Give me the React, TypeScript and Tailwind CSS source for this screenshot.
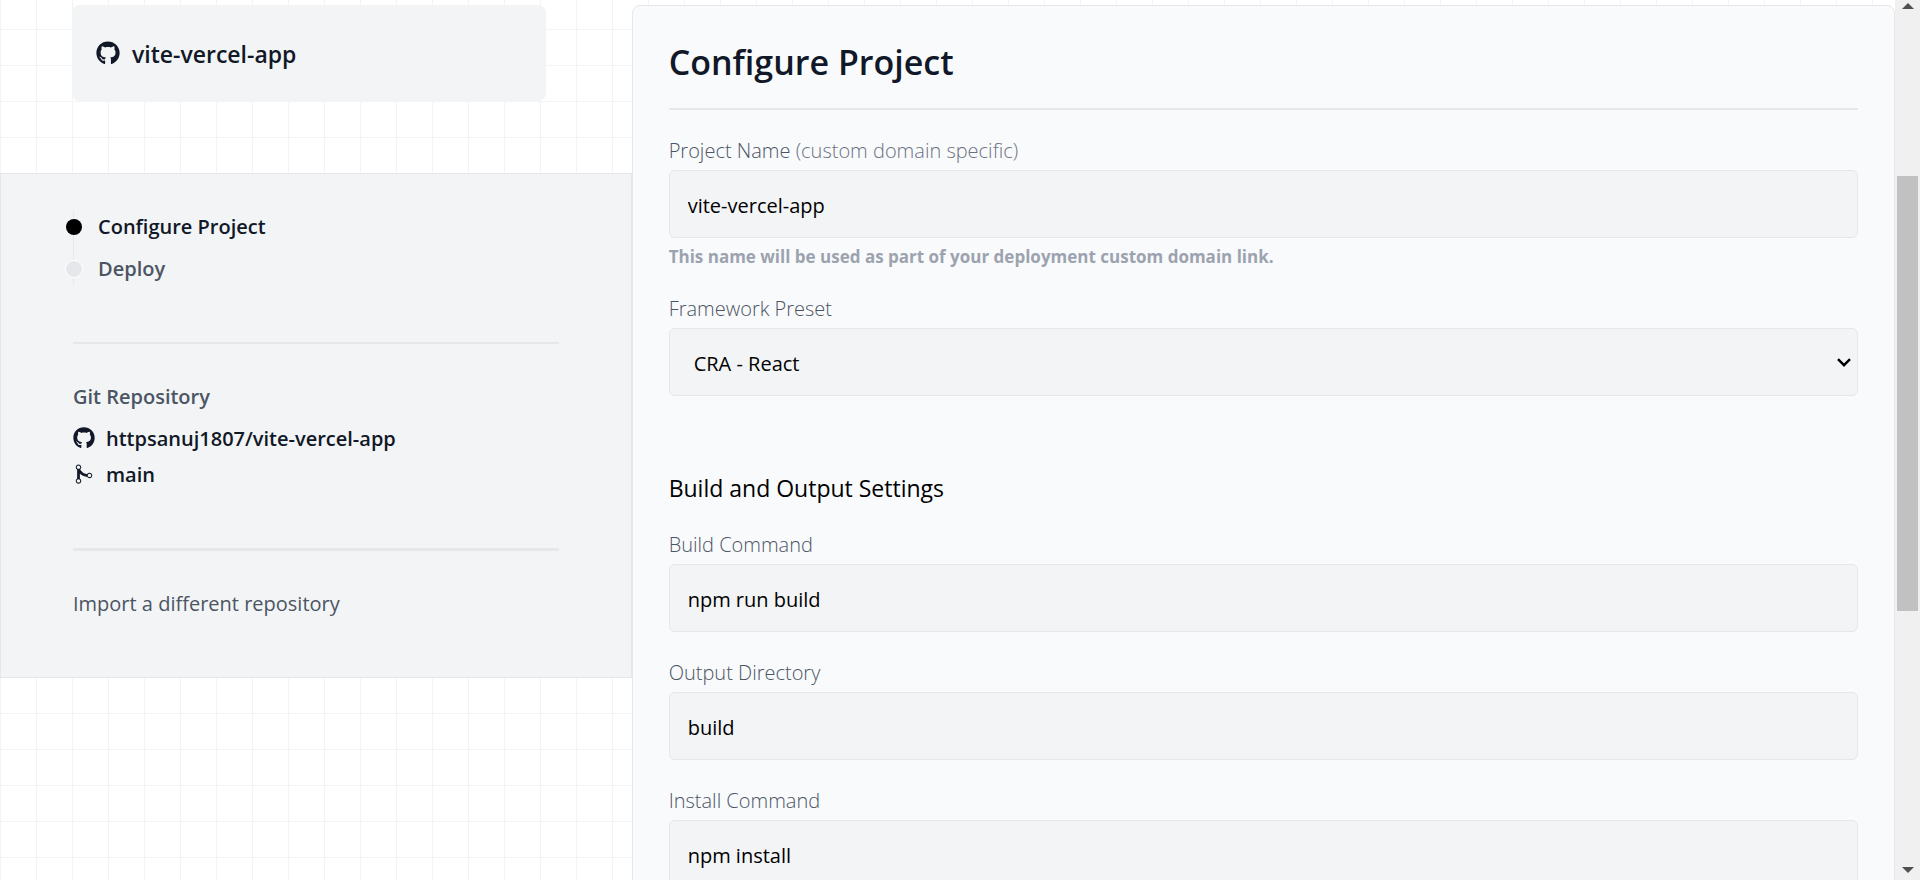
import { useState } from 'react';
import { FaGithub } from 'react-icons/fa';
import { IoMdGitMerge } from 'react-icons/io';

type FieldProps = {
  id: string;
  label: string;
  value: string;
  onChange: (value: string) => void;
  note?: string;
  hint?: string;
};

const labelClass = 'block text-[20px] leading-[30px] font-light text-[#4b5563]';
const controlClass =
  'mt-1 block h-[68px] w-full rounded-md border border-[#e5e7eb] bg-[#f3f4f6] text-[20px] leading-[30px] text-black outline-none';

function Field({ id, label, value, onChange, note, hint }: FieldProps) {
  return (
    <div className="mt-[26px]">
      <label htmlFor={id} className={labelClass}>
        {label}
        {note && <span className="text-[#6b7280]"> {note}</span>}
      </label>
      <input
        id={id}
        type="text"
        value={value}
        onChange={(e) => onChange(e.target.value)}
        className={`${controlClass} px-[18px] pt-[2px]`}
      />
      {hint && <p className="mt-2 text-[17px] leading-[22px] font-bold text-[#9ca3af]">{hint}</p>}
    </div>
  );
}

function Steps() {
  return (
    <ol className="relative flex flex-col gap-3 before:absolute before:inset-y-0 before:left-0 before:w-px before:bg-[#e5e7eb]">
      <li className="relative flex items-center gap-4 text-[20px] leading-[30px] font-semibold text-[#111827]">
        <span className="-ml-[7px] size-4 rounded-full bg-black" />
        Configure Project
      </li>
      <li className="relative flex items-center gap-4 text-[20px] leading-[30px] font-semibold text-[#4b5563]">
        <span className="-ml-[7px] size-4 rounded-full bg-[#e5e7eb] ring-1 ring-white" />
        Deploy
      </li>
    </ol>
  );
}

function Sidebar() {
  return (
    <aside className="flex w-1/3 shrink-0 flex-col pt-[5px]">
      <div className="ml-[72px] flex h-24 w-3/4 items-center gap-3 rounded-lg bg-[#f3f4f6] px-6 pt-[2px] text-[#111827]">
        <FaGithub size={24} className="mb-[2px]" />
        <h2 className="text-[23px] leading-8 font-semibold">vite-vercel-app</h2>
      </div>

      <div className="mt-[72px] border border-[#e5e7eb] bg-[#f3f4f6] px-[72px] pt-[38px] pb-[58px]">
        <Steps />
        <hr className="mt-[58px] border-t-2 border-[#e5e7eb]" />

        <h3 className="mt-[38px] text-[20px] leading-[30px] font-semibold text-[#4b5563]">Git Repository</h3>
        <a href="#repository" className="mt-3 flex items-center gap-[11px] text-[20px] leading-[30px] font-semibold text-[#111827]">
          <FaGithub size={22} className="mb-[2px]" />
          httpsanuj1807/vite-vercel-app
        </a>
        <p className="mt-[6px] flex items-center gap-[11px] text-[20px] leading-[30px] font-semibold text-[#111827]">
          <IoMdGitMerge size={22} className="mb-[2px]" />
          main
        </p>
        <hr className="mt-[58px] border-t-[3px] border-[#e5e7eb]" />

        <a href="#import" className="mt-[38px] block text-[20px] leading-[30px] text-[#4b5563]">
          Import a different repository
        </a>
      </div>
    </aside>
  );
}

function ScrollRail() {
  return (
    <div aria-hidden="true" className="flex w-[25px] shrink-0 flex-col items-center bg-[#f0f0f0] py-[3px]">
      <svg width="12" height="6" viewBox="0 0 12 6" className="shrink-0 fill-[#505050]">
        <path d="M0 6 6 0l6 6z" />
      </svg>
      <div className="flex w-[21px] grow flex-col">
        <div className="flex-[167]" />
        <div className="flex-[435] bg-[#c1c1c1]" />
        <div className="flex-[256]" />
      </div>
      <svg width="12" height="6" viewBox="0 0 12 6" className="mb-1 shrink-0 fill-[#505050]">
        <path d="M0 0h12L6 6z" />
      </svg>
    </div>
  );
}

export default function App() {
  const [name, setName] = useState('vite-vercel-app');
  const [preset, setPreset] = useState('CRA - React');
  const [build, setBuild] = useState('npm run build');
  const [output, setOutput] = useState('build');
  const [install, setInstall] = useState('npm install');

  return (
    <div className="flex h-screen overflow-hidden bg-white font-['Open_Sans','Noto_Sans',sans-serif]">
      <div className="flex min-w-0 grow bg-[linear-gradient(to_right,#f3f4f6_1px,transparent_1px),linear-gradient(to_bottom,#f3f4f6_1px,transparent_1px)] bg-[size:36px_36px] bg-[position:0_29px]">
        <Sidebar />

        <main className="min-w-0 grow pt-[5px]">
          <form
            onSubmit={(e) => e.preventDefault()}
            className="min-h-screen rounded-lg border border-[#e5e7eb] bg-[#f9fafc] px-9 pt-[34px] pb-9"
          >
            <h1 className="text-[34px] leading-[44px] font-semibold text-[#111827]">Configure Project</h1>
            <hr className="mt-6 border-t-2 border-[#e5e7eb]" />

            <Field
              id="project-name"
              label="Project Name"
              note="(custom domain specific)"
              value={name}
              onChange={setName}
              hint="This name will be used as part of your deployment custom domain link."
            />

            <div className="mt-[26px]">
              <label htmlFor="preset" className={labelClass}>
                Framework Preset
              </label>
              <div className="relative">
                <select
                  id="preset"
                  value={preset}
                  onChange={(e) => setPreset(e.target.value)}
                  className={`${controlClass} appearance-none px-6 pt-1`}
                >
                  <option>CRA - React</option>
                  <option>Vite - React</option>
                </select>
                <svg
                  width="14"
                  height="9"
                  viewBox="0 0 14 9"
                  className="pointer-events-none absolute top-[30px] right-[7px] fill-none stroke-black stroke-[2.4]"
                >
                  <path d="M1 1.2 7 7.2l6-6" />
                </svg>
              </div>
            </div>

            <h2 className="mt-[76px] text-[23px] leading-8 text-black">Build and Output Settings</h2>

            <Field id="build-command" label="Build Command" value={build} onChange={setBuild} />
            <Field id="output-directory" label="Output Directory" value={output} onChange={setOutput} />
            <Field id="install-command" label="Install Command" value={install} onChange={setInstall} />
          </form>
        </main>
      </div>
      <ScrollRail />
    </div>
  );
}
